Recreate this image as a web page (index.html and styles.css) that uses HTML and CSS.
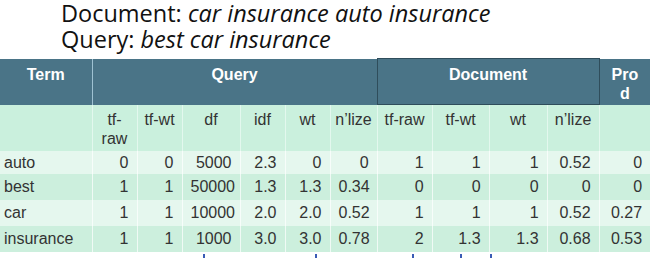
FILE: index.html
```html
<!DOCTYPE html>
<html>
<head>
<meta charset="utf-8">
<link rel="stylesheet" href="styles.css">
</head>
<body>
<div class="slide">
  <div class="title">
    <p class="line">Document: <em>car insurance auto insurance</em></p>
    <p class="line">Query: <em>best car insurance</em></p>
  </div>
  <table class="tfidf">
    <colgroup>
      <col style="width:92px"><col style="width:45px"><col style="width:45px"><col style="width:58px"><col style="width:45px"><col style="width:45px"><col style="width:47px"><col style="width:55px"><col style="width:57px"><col style="width:58px"><col style="width:52px"><col style="width:51px">
    </colgroup>
    <thead>
      <tr class="group">
        <th class="term">Term</th>
        <th colspan="6" class="query">Query</th>
        <th colspan="4" class="doc">Document</th>
        <th class="prod">Pro<br>d</th>
      </tr>
      <tr class="sub">
        <th></th>
        <th>tf-raw</th><th>tf-wt</th><th>df</th><th>idf</th><th>wt</th><th>n’lize</th>
        <th>tf-raw</th><th>tf-wt</th><th>wt</th><th>n’lize</th>
        <th></th>
      </tr>
    </thead>
    <tbody>
      <tr class="light short">
        <td>auto</td><td>0</td><td>0</td><td>5000</td><td>2.3</td><td>0</td><td>0</td><td>1</td><td>1</td><td>1</td><td>0.52</td><td>0</td>
      </tr>
      <tr class="dark">
        <td>best</td><td>1</td><td>1</td><td>50000</td><td>1.3</td><td>1.3</td><td>0.34</td><td>0</td><td>0</td><td>0</td><td>0</td><td>0</td>
      </tr>
      <tr class="light">
        <td>car</td><td>1</td><td>1</td><td>10000</td><td>2.0</td><td>2.0</td><td>0.52</td><td>1</td><td>1</td><td>1</td><td>0.52</td><td>0.27</td>
      </tr>
      <tr class="dark">
        <td>insurance</td><td>1</td><td>1</td><td>1000</td><td>3.0</td><td>3.0</td><td>0.78</td><td>2</td><td>1.3</td><td>1.3</td><td>0.68</td><td>0.53</td>
      </tr>
    </tbody>
  </table>
  <div class="cut">
    <span class="tick t1"></span><span class="tick t2"></span><span class="tick t3"></span><span class="tick t4"></span><span class="tick t5"></span>
  </div>
</div>
</body>
</html>
```
FILE: styles.css
```css
html, body {
  margin: 0;
  padding: 0;
  background: #ffffff;
}
.slide {
  width: 650px;
  height: 258px;
  overflow: hidden;
}
.title {
  padding: 0 0 0 61px;
  height: 58px;
  box-sizing: border-box;
  font-family: "Open Sans", sans-serif;
  font-size: 23.5px;
  color: #111;
}
.line {
  margin: 0;
  line-height: 26px;
  white-space: nowrap;
}
.line em {
  font-style: italic;
}
.tfidf {
  border-collapse: collapse;
  table-layout: fixed;
  width: 650px;
  font-family: "Liberation Sans", Arial, sans-serif;
  font-size: 16px;
  color: #333;
}
.tfidf th, .tfidf td {
  padding: 0 8px;
  line-height: 19px;
}
.group th {
  background: #4a7487;
  color: #fff;
  font-weight: bold;
  height: 46px;
  vertical-align: top;
  padding-top: 6px;
  box-sizing: border-box;
  text-align: center;
}
.group .term {
  border-right: 1px solid #9fc2d2;
}
.group .doc {
  border: 1px solid #2f4d5b;
}
.group .prod {
  border-left: 1px solid #2f4d5b;
  padding: 6px 0 0;
}
.sub th {
  background: #caf0dd;
  font-weight: normal;
  color: #333;
  height: 46px;
  vertical-align: top;
  padding: 5px 4px 0;
  box-sizing: border-box;
  text-align: center;
  border-left: 1px solid #e3f8ee;
}
.sub th:first-child {
  border-left: none;
}
tbody td {
  text-align: right;
  height: 26px;
  box-sizing: border-box;
  padding-right: 9px;
  vertical-align: middle;
  border-left: 1px solid rgba(255, 255, 255, 0.7);
}
tbody td:first-child {
  text-align: left;
  padding-left: 4px;
  border-left: none;
}
tbody tr.short td {
  height: 23px;
}
tr.light td {
  background: #e5f7ee;
}
tr.dark td {
  background: #ccefdd;
}
.cut {
  position: relative;
  height: 7px;
}
.tick {
  position: absolute;
  top: 2px;
  width: 2px;
  height: 5px;
  background: #3b5bb5;
}
.t1 { left: 203px; }
.t2 { left: 315px; }
.t3 { left: 412px; }
.t4 { left: 460px; }
.t5 { left: 490px; }
```
